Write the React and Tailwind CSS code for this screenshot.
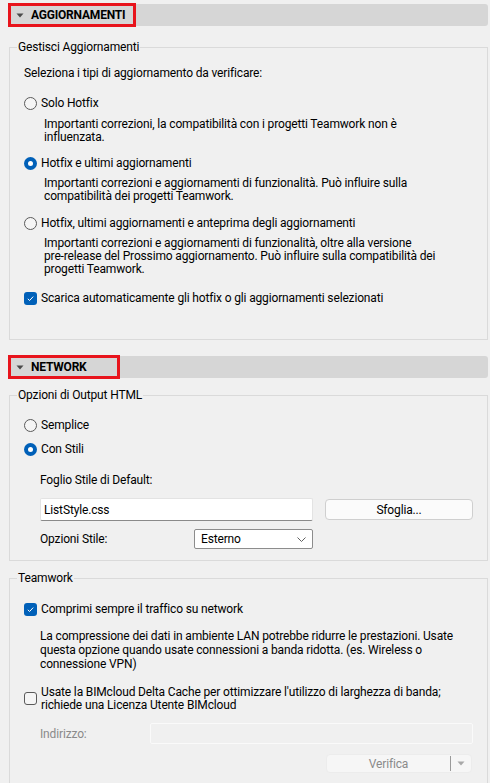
import React from "react";

function Tri() {
  return (
    <svg width="8" height="5" viewBox="0 0 8 5" className="shrink-0">
      <path d="M0.5 0.5 L7.5 0.5 L4 4.5 Z" fill="#4a4a4a" />
    </svg>
  );
}

function Header({ title, redW }) {
  return (
    <div className="relative h-[22px] bg-[#d6d6d6] rounded-r-[3px] flex items-center pl-[8px] gap-[7px]">
      <Tri />
      <span className="font-bold text-[12px] tracking-[-0.2px] text-black">{title}</span>
      <div
        className="absolute left-0 top-[-1px] h-[24px] border-[3px] border-[#e8141c]"
        style={{ width: redW }}
      />
    </div>
  );
}

function Radio({ checked }) {
  if (checked) {
    return (
      <span className="w-[13px] h-[13px] rounded-full bg-[#0060b8] flex items-center justify-center shrink-0">
        <span className="w-[5px] h-[5px] rounded-full bg-white" />
      </span>
    );
  }
  return <span className="w-[13px] h-[13px] rounded-full border border-[#5a5a5a] bg-[#f5f5f5] shrink-0" />;
}

function Check({ checked }) {
  if (checked) {
    return (
      <span className="w-[13px] h-[13px] rounded-[3px] bg-[#0060b8] flex items-center justify-center shrink-0">
        <svg width="9" height="9" viewBox="0 0 9 9">
          <path d="M1.8 4.8 L3.6 6.5 L7.2 2.6" fill="none" stroke="white" strokeWidth="1" />
        </svg>
      </span>
    );
  }
  return <span className="w-[13px] h-[13px] rounded-[3px] border border-[#5a5a5a] bg-[#f5f5f5] shrink-0" />;
}

function Group({ label, children, className = "" }) {
  return (
    <fieldset className={"ml-[1px] min-w-0 border border-[#dadada] px-0 " + className}>
      <legend className="ml-[7px] px-[1px] leading-[16px]">{label}</legend>
      {children}
    </fieldset>
  );
}

export default function App() {
  return (
    <div className="w-[490px] h-[783px] overflow-hidden bg-[#f0f0f0] text-[12px] tracking-[-0.15px] text-black pt-[4px] pl-[8px] pr-[2px] font-['Roboto',sans-serif] whitespace-nowrap">
      <Header title="AGGIORNAMENTI" redW={128} />

      <Group label="Gestisci Aggiornamenti" className="mt-[13px] pb-[33px]">
        <div className="pl-[14px]">
          <div className="mt-[10px] leading-[16px]">Seleziona i tipi di aggiornamento da verificare:</div>

          <div className="mt-[14px] flex items-center gap-[4px] leading-[16px]">
            <Radio />
            <span>Solo Hotfix</span>
          </div>
          <div className="mt-[6.5px] pl-[20px] leading-[13px]">
            Importanti correzioni, la compatibilità con i progetti Teamwork non è<br />influenzata.
          </div>

          <div className="mt-[11.5px] flex items-center gap-[4px] leading-[16px]">
            <Radio checked />
            <span>Hotfix e ultimi aggiornamenti</span>
          </div>
          <div className="mt-[5.5px] pl-[20px] leading-[13px]">
            Importanti correzioni e aggiornamenti di funzionalità. Può influire sulla<br />compatibilità dei progetti Teamwork.
          </div>

          <div className="mt-[12.5px] flex items-center gap-[4px] leading-[16px]">
            <Radio />
            <span>Hotfix, ultimi aggiornamenti e anteprima degli aggiornamenti</span>
          </div>
          <div className="mt-[5.5px] pl-[20px] leading-[13px]">
            Importanti correzioni e aggiornamenti di funzionalità, oltre alla versione<br />
            pre-release del Prossimo aggiornamento. Può influire sulla compatibilità dei<br />
            progetti Teamwork.
          </div>

          <div className="mt-[14.5px] flex items-center gap-[4px] leading-[16px]">
            <Check checked />
            <span>Scarica automaticamente gli hotfix o gli aggiornamenti selezionati</span>
          </div>
        </div>
      </Group>

      <div className="mt-[16px]">
        <Header title="NETWORK" redW={112} />
      </div>

      <Group label="Opzioni di Output HTML" className="mt-[9px] pb-[11px]">
        <div className="pl-[14px] pr-[14px]">
          <div className="mt-[14px] flex items-center gap-[4px] leading-[16px]">
            <Radio />
            <span>Semplice</span>
          </div>
          <div className="mt-[8px] flex items-center gap-[4px] leading-[16px]">
            <Radio checked />
            <span>Con Stili</span>
          </div>
          <div className="pl-[16px]">
            <div className="mt-[15px] leading-[16px]">Foglio Stile di Default:</div>
            <div className="mt-[10px] flex items-start gap-[12px]">
              <div className="w-[273px] h-[23px] bg-white border border-[#e3e3e3] border-b-[#8a8a8a] rounded-[2px] flex items-center pl-[3px]">
                ListStyle.css
              </div>
              <div className="mt-[1px] w-[148px] h-[21px] bg-[#fbfbfb] border border-[#cfcfcf] rounded-[4px] flex items-center justify-center">
                Sfoglia...
              </div>
            </div>
            <div className="mt-[8px] flex items-center">
              <span className="w-[154px] leading-[16px]">Opzioni Stile:</span>
              <div className="w-[119px] h-[20px] bg-white border border-[#8c8c8c] rounded-[2px] flex items-center justify-between pl-[6px] pr-[6px]">
                <span>Esterno</span>
                <svg width="9" height="5" viewBox="0 0 9 5">
                  <path d="M0.5 0.5 L4.5 4.5 L8.5 0.5" fill="none" stroke="#606060" strokeWidth="1" />
                </svg>
              </div>
            </div>
          </div>
        </div>
      </Group>

      <Group label="Teamwork" className="mt-[9px] pb-[20px]">
        <div className="pl-[14px] pr-[14px]">
          <div className="mt-[15px] flex items-center gap-[4px] leading-[16px]">
            <Check checked />
            <span>Comprimi sempre il traffico su network</span>
          </div>
          <div className="mt-[12px] pl-[16px] leading-[14px]">
            La compressione dei dati in ambiente LAN potrebbe ridurre le prestazioni. Usate<br />
            questa opzione quando usate connessioni a banda ridotta. (es. Wireless o<br />
            connessione VPN)
          </div>
          <div className="mt-[14.5px] flex items-center gap-[4px] leading-[13px]">
            <Check />
            <span>
              Usate la BIMcloud Delta Cache per ottimizzare l'utilizzo di larghezza di banda;<br />
              richiede una Licenza Utente BIMcloud
            </span>
          </div>
          <div className="pl-[16px]">
            <div className="mt-[11.5px] flex items-center">
              <span className="w-[110px] text-[#8a8a8a] leading-[16px]">Indirizzo:</span>
              <div className="w-[323px] h-[21px] border border-[#fafafa] rounded-[2px]" />
            </div>
            <div className="mt-[10px] flex">
              <div className="ml-[286px] w-[146px] h-[19px] bg-[#f6f6f6] border border-[#ececec] rounded-[4px] flex items-center text-[#8a8a8a]">
                <span className="flex-1 text-center">Verifica</span>
                <span className="w-[1px] h-[15px] bg-[#9a9a9a]" />
                <span className="w-[20px] flex justify-center">
                  <svg width="8" height="5" viewBox="0 0 8 5">
                    <path d="M0.5 0.5 L7.5 0.5 L4 4.5 Z" fill="#a8a8a8" />
                  </svg>
                </span>
              </div>
            </div>
          </div>
        </div>
      </Group>
    </div>
  );
}
